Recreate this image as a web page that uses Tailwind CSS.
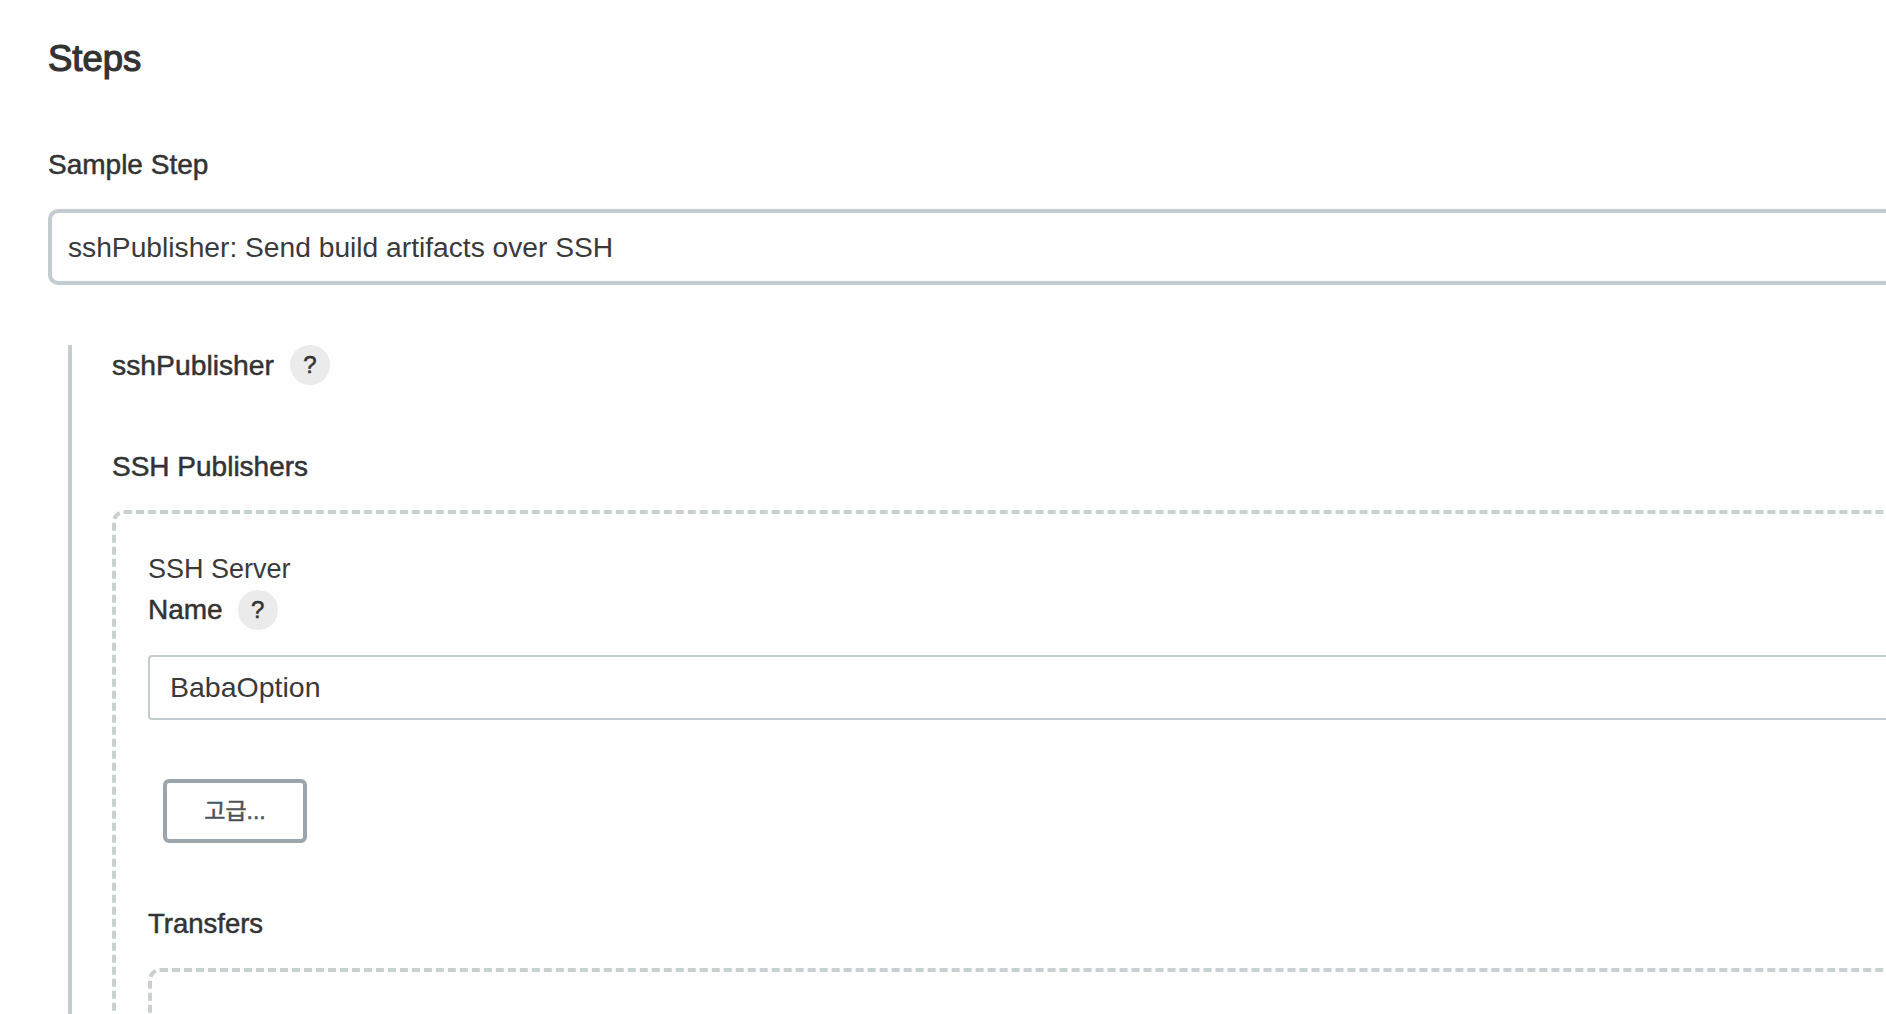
<!doctype html>
<html><head><meta charset="utf-8"><script src="https://cdn.jsdelivr.net/npm/@tailwindcss/browser@4"></script></head>
<body class="bg-white">
<div class="h-[1014px] w-[1886px] overflow-hidden bg-[#fefefe] pl-12 text-[#333] font-['Liberation_Sans','Noto_Sans_CJK_KR',sans-serif]">
  <h2 class="pt-[39px] text-[36.5px] leading-[40px] font-normal [-webkit-text-stroke:1.2px_#333]">Steps</h2>
  <div class="mt-[70px] text-[28px] leading-[32px] [-webkit-text-stroke:0.5px_#333]">Sample Step</div>
  <div class="mt-[28px] flex h-[76px] w-[2000px] items-center rounded-[10px] border-4 border-[#c3cccf] pl-4 text-[28.2px] text-[#3a3a3a]">sshPublisher: Send build artifacts over SSH</div>
  <div class="mt-[60px] ml-5 border-l-4 border-[#c3cccf] pl-10 h-[800px]">
    <div class="flex h-10 items-center gap-4 text-[28.3px] [-webkit-text-stroke:0.5px_#333]"><span>sshPublisher</span><span class="flex h-10 w-10 items-center justify-center rounded-full bg-[#ebebeb] text-[24px]">?</span></div>
    <div class="mt-[66px] text-[28px] leading-[32px] [-webkit-text-stroke:0.5px_#333]">SSH Publishers</div>
    <div class="mt-[27px] w-[2000px] rounded-xl border-4 border-dashed border-[#c8d0d2] pl-8 h-[800px]">
      <div class="mt-[39px] text-[27px] leading-[32px] text-[#3a3a3a]">SSH Server</div>
      <div class="mt-[5px] flex h-10 items-center gap-[15px] text-[28px] [-webkit-text-stroke:0.5px_#333]"><span>Name</span><span class="flex h-10 w-10 items-center justify-center rounded-full bg-[#ebebeb] text-[24px]">?</span></div>
      <div class="mt-[25px] flex h-[65px] items-center rounded border-2 border-[#c3cccf] pl-5 text-[28.5px] text-[#3a3a3a]">BabaOption</div>
      <div class="mt-[59px] ml-[15px] flex h-[64px] w-[144px] items-center justify-center rounded-md border-4 border-[#9aa5ad] text-[23px] text-[#4b5259] [-webkit-text-stroke:0.5px_#4b5259]">고급...</div>
      <div class="mt-[65px] text-[27.5px] leading-[32px] [-webkit-text-stroke:0.5px_#333]">Transfers</div>
      <div class="mt-[28px] rounded-xl border-4 border-dashed border-[#c8d0d2] h-[300px]"></div>
    </div>
  </div>
</div>
</body></html>
